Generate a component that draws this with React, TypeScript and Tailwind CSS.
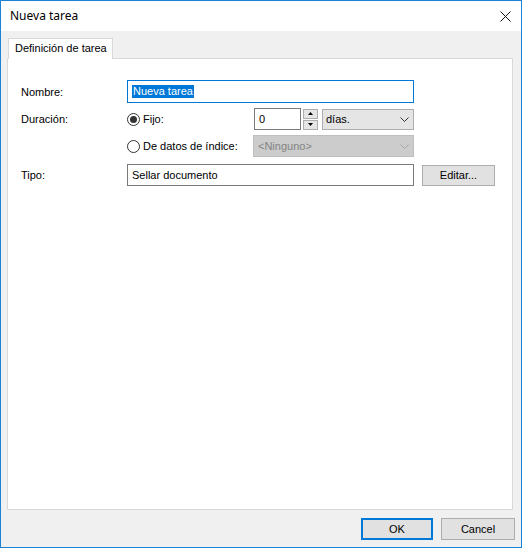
import React from "react";

function Radio({ checked }: { checked?: boolean }) {
  return (
    <svg width="13" height="13" viewBox="0 0 13 13" className="shrink-0">
      <circle cx="6.5" cy="6.5" r="6" fill="#ffffff" stroke="#333333" strokeWidth="1" />
      {checked && <circle cx="6.5" cy="6.5" r="3.5" fill="#333333" />}
    </svg>
  );
}

function Chevron({ color }: { color: string }) {
  return (
    <svg width="9" height="5" viewBox="0 0 9 5" className="shrink-0">
      <path d="M0.5 0.5 L4.5 4.5 L8.5 0.5" fill="none" stroke={color} strokeWidth="1" />
    </svg>
  );
}

export default function App() {
  return (
    <div className="w-[522px] h-[548px] border border-[#1883d7] bg-[#f0f0f0] flex flex-col font-['Liberation_Sans',Arial,sans-serif] text-[11px] text-black overflow-hidden">
      {/* title bar */}
      <div className="h-[30px] bg-white flex items-center justify-between pl-[9px] pr-[10px] shrink-0">
        <span className="font-['Noto_Sans',sans-serif] text-[12px] leading-none text-black">Nueva tarea</span>
        <svg width="11" height="11" viewBox="0 0 11 11">
          <path d="M0.5 0.5 L10.5 10.5 M10.5 0.5 L0.5 10.5" stroke="#111111" strokeWidth="1" />
        </svg>
      </div>

      <div className="flex-1 flex flex-col pl-[6px] pr-[6px] pt-[7px]">
        {/* tab strip */}
        <div className="flex h-[21px] -mb-px relative z-10">
          <div className="ml-[1px] w-[105px] h-[21px] bg-white border border-b-0 border-[#d9d9d9] flex items-center pl-[6px] pb-[2px]">
            Definición de tarea
          </div>
        </div>

        {/* tab page */}
        <div className="h-[452px] mr-[2px] border border-[#d9d9d9] bg-white pt-[21px] pl-[13px] flex flex-col">
          {/* Nombre */}
          <div className="flex items-center h-[23px]">
            <div className="w-[106px] pt-[1px]">Nombre:</div>
            <div className="w-[287px] h-[23px] border border-[#0078d7] flex items-center pl-[4px]">
              <span className="bg-[#0078d7] text-white px-[1px] leading-[13px]">Nueva tarea</span>
            </div>
          </div>

          {/* Duración: fijo */}
          <div className="flex items-center h-[22px] mt-[5px]">
            <div className="w-[106px]">Duración:</div>
            <div className="w-[127px] flex items-center gap-[3px]">
              <Radio checked />
              <span>Fijo:</span>
            </div>
            <div className="w-[47px] h-[22px] border border-[#7a7a7a] flex items-center pl-[4px]">0</div>
            <div className="ml-[2px] w-[15px] h-[21px] flex flex-col justify-between">
              <div className="h-[10px] border border-[#adadad] bg-[#e5e5e5] flex items-center justify-center">
                <svg width="5" height="3" viewBox="0 0 5 3">
                  <path d="M2.5 0 L5 3 L0 3 Z" fill="#000000" />
                </svg>
              </div>
              <div className="h-[10px] border border-[#adadad] bg-[#e5e5e5] flex items-center justify-center">
                <svg width="5" height="3" viewBox="0 0 5 3">
                  <path d="M0 0 L5 0 L2.5 3 Z" fill="#000000" />
                </svg>
              </div>
            </div>
            <div className="ml-[4px] w-[92px] h-[21px] border border-[#adadad] bg-[#e5e5e5] flex items-center justify-between pl-[3px] pr-[4px]">
              <span>días.</span>
              <Chevron color="#333333" />
            </div>
          </div>

          {/* Duración: de datos de índice */}
          <div className="flex items-center h-[22px] mt-[5px]">
            <div className="w-[106px]" />
            <div className="w-[126px] flex items-center gap-[3px]">
              <Radio />
              <span>De datos de índice:</span>
            </div>
            <div className="w-[161px] h-[22px] border border-[#bfbfbf] bg-[#cccccc] flex items-center justify-between pl-[4px] pr-[4px] text-[#838383]">
              <span>&lt;Ninguno&gt;</span>
              <Chevron color="#a6a6a6" />
            </div>
          </div>

          {/* Tipo */}
          <div className="flex items-center h-[22px] mt-[7px]">
            <div className="w-[106px]">Tipo:</div>
            <div className="w-[287px] h-[22px] border border-[#7a7a7a] flex items-center pl-[4px]">Sellar documento</div>
            <div className="ml-[8px] w-[73px] h-[21px] border border-[#adadad] bg-[#e1e1e1] flex items-center justify-center">
              Editar...
            </div>
          </div>
        </div>

        {/* dialog buttons */}
        <div className="flex justify-end gap-[8px] mt-[8px]">
          <div className="w-[72px] h-[22px] border-2 border-[#0078d7] bg-[#e1e1e1] flex items-center justify-center">OK</div>
          <div className="w-[74px] h-[22px] border border-[#adadad] bg-[#e1e1e1] flex items-center justify-center">Cancel</div>
        </div>
      </div>
    </div>
  );
}
